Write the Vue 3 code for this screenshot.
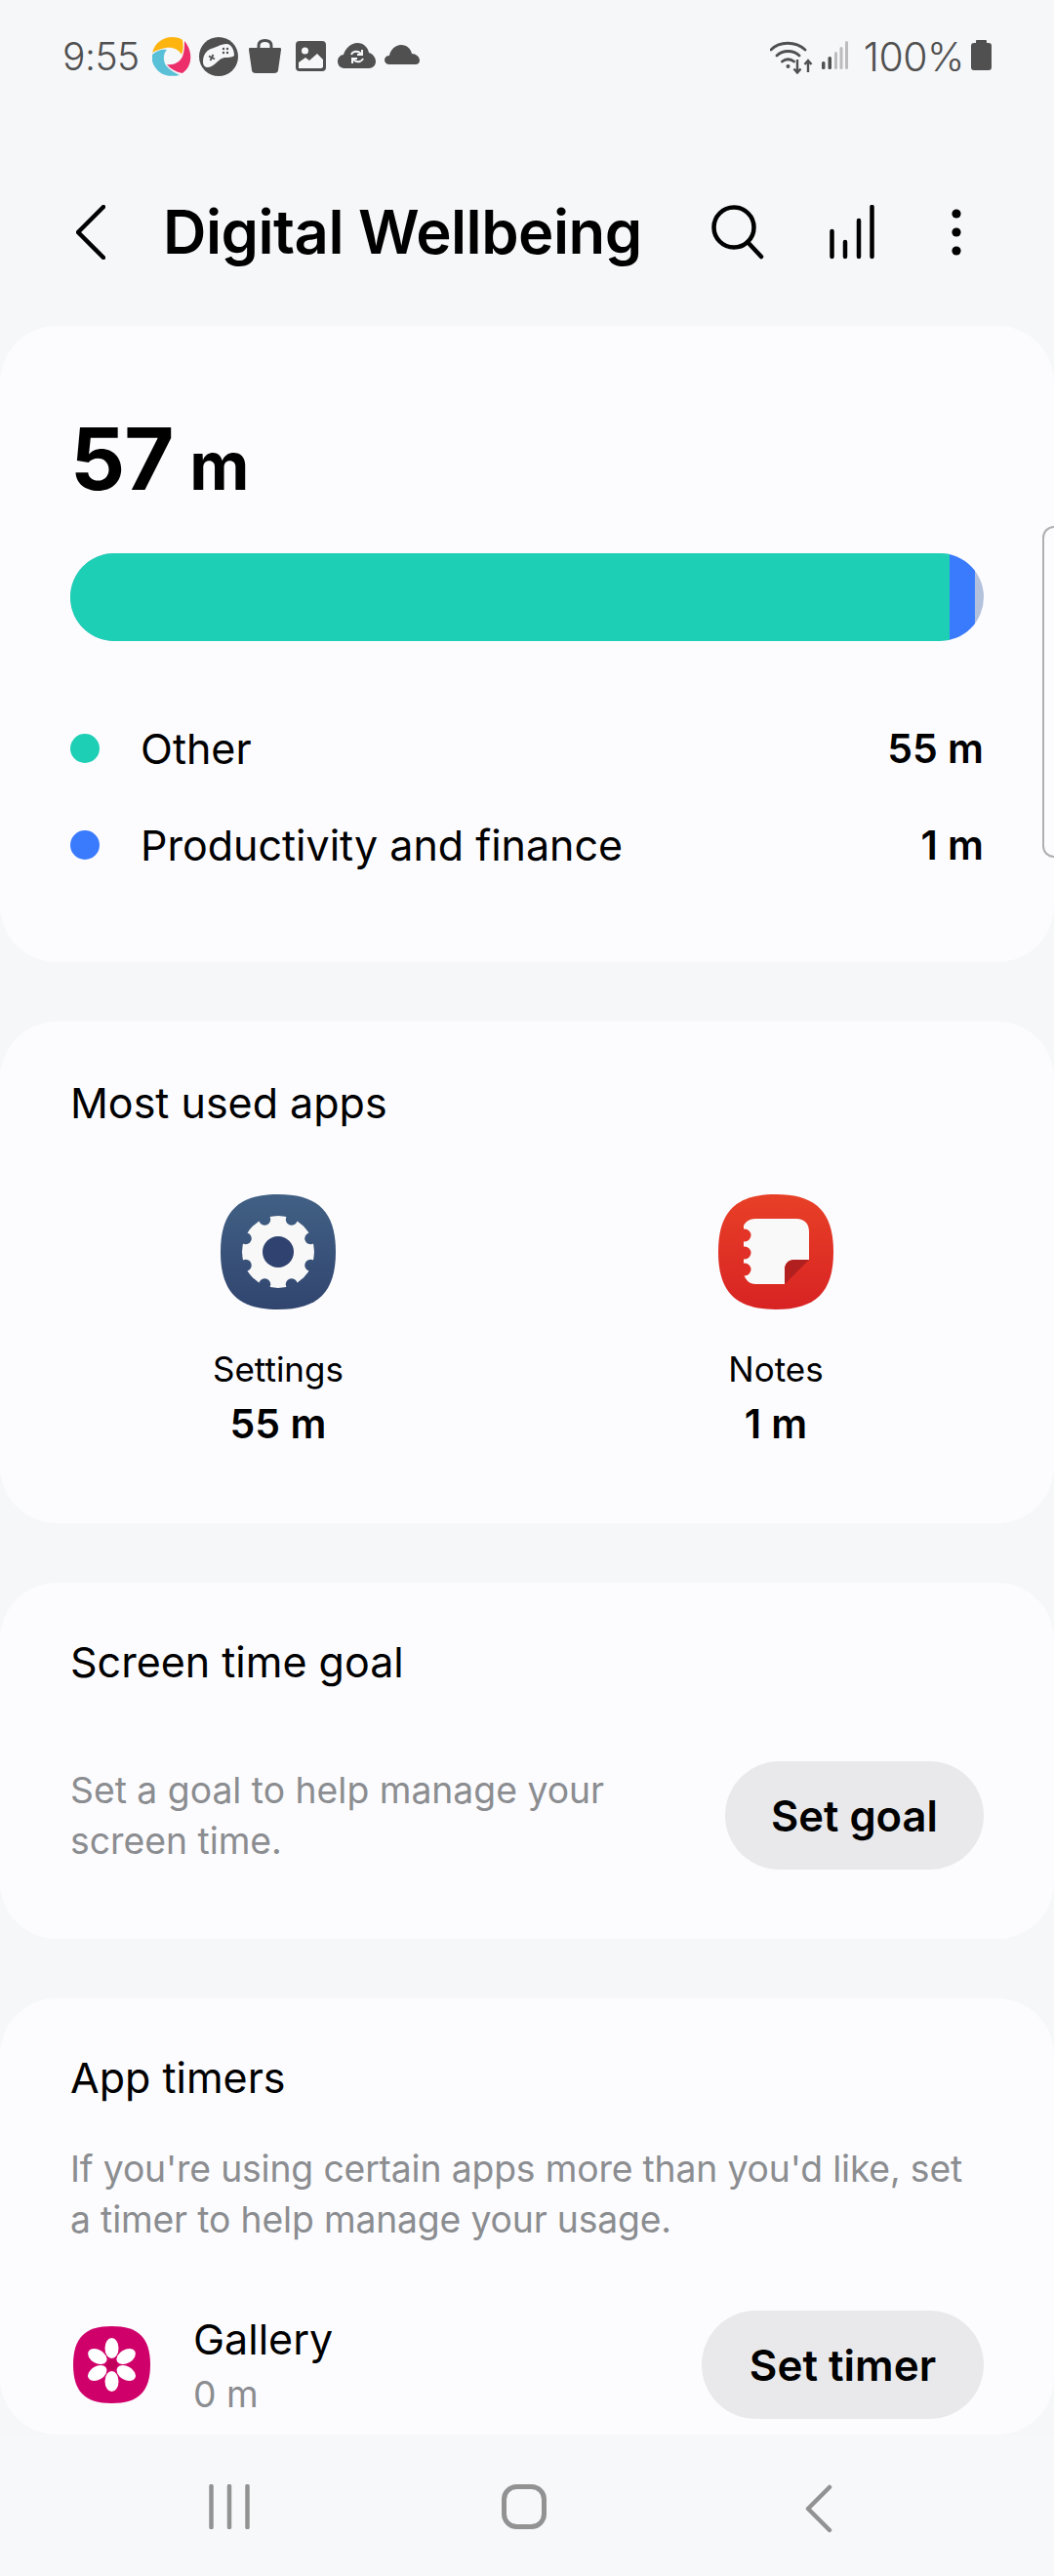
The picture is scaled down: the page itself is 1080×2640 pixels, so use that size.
<script setup>
const gearNotches = [0, 1, 2, 3, 4, 5, 6, 7].map((i) => {
    const angle = ((22.5 + i * 45) * Math.PI) / 180;
    return { x: 59 + Math.sin(angle) * 36, y: 59 - Math.cos(angle) * 36 };
});
const petals = [0, 60, 120, 180, 240, 300];
</script>

<template>
    <div class="screen">
        <div class="status-bar">
            <span class="time">9:55</span>
            <svg class="st-swirl" width="40" height="40" viewBox="0 0 40 40">
                <path d="M0 16C3 5 12 0 20 0C25 0 29 1 31 3C32 8 32 13 30 18C27 12 20 10 14 11C8 12 3 14 0 16Z" fill="#fdb40f" />
                <path d="M33 4C38 10 40 17 39 24C38 30 35 34 31 37C25 36 19 33 15 28C22 29 28 26 31 20C33 15 33 9 33 4Z" fill="#ec2f6b" />
                <path d="M0 18C4 14 10 12 15 13C11 17 11 24 14 29C18 34 24 37 28 39C19 41 9 40 3 31C0 27 -1 22 0 18Z" fill="#59c0d8" />
            </svg>
            <svg class="st-game" width="40" height="40" viewBox="0 0 40 40">
                <circle cx="20" cy="20" r="20" fill="#505050" />
                <path d="M4 25C4 19 7 14 12 12C17 11 22 7 28 7C33 7 36 13 36 19C32 22 27 20 23 22C18 25 14 31 9 31C6 31 4 29 4 25Z" fill="#f6f7f9" />
                <path d="M10 19.500L16 22.500M14.500 18L11.500 24" stroke="#505050" stroke-width="1.800" />
                <circle cx="25" cy="12" r="1.200" fill="#505050" />
                <circle cx="29" cy="12" r="1.200" fill="#505050" />
                <circle cx="25" cy="16" r="1.200" fill="#505050" />
                <circle cx="29" cy="16" r="1.200" fill="#505050" />
            </svg>
            <svg class="st-bag" width="33" height="36" viewBox="0 0 33 36">
                <path d="M1 9H32C33 9 33 10 33 11L30 32C30 34 28 35 26 35H7C5 35 3 34 3 32L0 11C0 10 0 9 1 9Z" fill="#505050" />
                <path d="M10 10V7C10 3 13 1.500 16.500 1.500C20 1.500 23 3 23 7V10" fill="none" stroke="#505050" stroke-width="3" />
            </svg>
            <svg class="st-pic" width="31" height="31" viewBox="0 0 31 31">
                <rect width="31" height="31" rx="4" fill="#505050" />
                <circle cx="9.500" cy="10" r="3.500" fill="#f6f7f9" />
                <path d="M3 28V22L10 17L14 20L22 13L28 19V26C28 27 27 28 26 28Z" fill="#f6f7f9" />
            </svg>
            <svg class="st-cloud-sync" width="39" height="27" viewBox="0 0 39 27">
                <path d="M7 26C2 26 0 22 0 19C0 15 3 12 6 12C8 5 14 0 20 0C27 0 31 5 32 10C36 11 39 15 39 19C39 23 36 26 32 26Z" fill="#505050" />
                <path d="M14 12C15 9 19 8 22 9.500L24 11M26 16C25 19 21 20 18 18.500L16 17" fill="none" stroke="#f6f7f9" stroke-width="2" />
                <path d="M25 7V12H20M15 21V16H20" fill="none" stroke="#f6f7f9" stroke-width="2" />
            </svg>
            <svg class="st-cloud" width="36" height="20" viewBox="0 0 36 20">
                <path d="M5 20C2 20 0 18 0 15.500C0 13 2 11 5 11C6 5 11 0 17 0C23 0 27 4 28 9C32 9 36 12 36 16C36 18.500 34 20 32 20Z" fill="#505050" />
            </svg>
            <span class="status-spacer"></span>
            <svg class="st-wifi" width="44" height="34" viewBox="0 0 44 34">
                <path d="M1 9C10 0 26 0 36 9M7 15C13 9 24 9 30 15M12.500 21C16 18 21 18 24.500 21" fill="none" stroke="#505050" stroke-width="2.800" stroke-linecap="round" />
                <circle cx="18.500" cy="26" r="2" fill="#505050" />
                <path d="M28 19V32M24.500 28.500L28 32.500L31.500 28.500M39 32V20M35.500 24L39 20L42.500 24" fill="none" stroke="#505050" stroke-width="2.400" />
            </svg>
            <svg class="st-signal" width="27" height="30" viewBox="0 0 27 30">
                <rect x="0" y="21" width="3.500" height="8" rx="1.500" fill="#505050" />
                <rect x="6.500" y="16" width="3.500" height="13" rx="1.500" fill="#505050" />
                <rect x="13" y="11" width="3" height="18" rx="1.500" fill="#bcbcbe" />
                <rect x="18.500" y="6" width="3" height="23" rx="1.500" fill="#bcbcbe" />
                <rect x="24" y="0" width="3" height="29" rx="1.500" fill="#bcbcbe" />
            </svg>
            <span class="battery-text">100%</span>
            <svg class="st-battery" width="21" height="31" viewBox="0 0 21 31">
                <path d="M6 0H15C15.500 0 16 .5 16 1V3H18C20 3 21 4 21 6V28C21 30 20 31 18 31H3C1 31 0 30 0 28V6C0 4 1 3 3 3H5V1C5 .5 5.500 0 6 0Z" fill="#505050" />
            </svg>
        </div>

        <div class="header">
            <svg class="back" width="30" height="56" viewBox="0 0 30 56">
                <path d="M28 2L2 28L28 54" fill="none" stroke="#000" stroke-width="4.500" stroke-linecap="round" stroke-linejoin="round" />
            </svg>
            <h1 class="title">Digital Wellbeing</h1>
            <svg class="search" width="54" height="56" viewBox="0 0 54 56">
                <circle cx="23" cy="23" r="20.500" fill="none" stroke="#000" stroke-width="4.500" />
                <path d="M37 38L51 53" stroke="#000" stroke-width="4.500" stroke-linecap="round" />
            </svg>
            <svg class="stats" width="46" height="56" viewBox="0 0 46 56">
                <path d="M2.500 27V53M16 38V53M30 16V53M43.500 2V53" stroke="#000" stroke-width="4.500" stroke-linecap="round" />
            </svg>
            <svg class="more" width="10" height="48" viewBox="0 0 10 48">
                <circle cx="5" cy="5" r="4.600" />
                <circle cx="5" cy="24" r="4.600" />
                <circle cx="5" cy="43" r="4.600" />
            </svg>
        </div>

        <main class="content">
            <section class="card usage">
                <div class="total">57 <span class="total-unit">m</span></div>
                <div class="bar">
                    <div class="bar-other"></div>
                    <div class="bar-prod"></div>
                </div>
                <div class="legend">
                    <span class="dot dot-teal"></span>
                    <span class="legend-name">Other</span>
                    <span class="legend-val">55 m</span>
                </div>
                <div class="legend">
                    <span class="dot dot-blue"></span>
                    <span class="legend-name">Productivity and finance</span>
                    <span class="legend-val">1 m</span>
                </div>
                <div class="scrollbar"></div>
            </section>

            <section class="card most-used">
                <h2 class="card-title">Most used apps</h2>
                <div class="apps">
                    <div class="app">
                        <svg width="118" height="118" viewBox="0 0 118 118">
                            <defs>
                                <linearGradient id="settingsBg" x1="0" y1="0" x2="0" y2="1">
                                    <stop offset="0" stop-color="#416084" />
                                    <stop offset="1" stop-color="#31456f" />
                                </linearGradient>
                                <mask id="gearMask">
                                    <circle cx="59" cy="59" r="37" fill="#fff" />
                                    <circle v-for="(n, i) in gearNotches" :key="i" :cx="n.x" :cy="n.y" r="6" fill="#000" />
                                </mask>
                            </defs>
                            <path d="M59 0C100 0 118 18 118 59S100 118 59 118 0 100 0 59 18 0 59 0Z" fill="url(#settingsBg)" />
                            <rect x="20" y="20" width="78" height="78" fill="#f8f8f8" mask="url(#gearMask)" />
                            <circle cx="59" cy="59" r="16" fill="#30426f" />
                        </svg>
                        <span class="app-name">Settings</span>
                        <span class="app-time">55 m</span>
                    </div>
                    <div class="app">
                        <svg width="118" height="118" viewBox="0 0 118 118">
                            <defs>
                                <linearGradient id="notesBg" x1="0" y1="0" x2="0" y2="1">
                                    <stop offset="0" stop-color="#e84027" />
                                    <stop offset="1" stop-color="#d82323" />
                                </linearGradient>
                            </defs>
                            <path d="M59 0C100 0 118 18 118 59S100 118 59 118 0 100 0 59 18 0 59 0Z" fill="url(#notesBg)" />
                            <path d="M38 25H80C88 25 93 30 93 38V67H78C72 67 68 71 68 77V92H38C32 92 28 88 26 82V32C28 28 32 25 38 25Z" fill="#f9f9f9" />
                            <circle cx="27" cy="42" r="6.500" fill="#e43327" />
                            <circle cx="27" cy="60" r="6.500" fill="#e13027" />
                            <circle cx="27" cy="77" r="6.500" fill="#df2d26" />
                            <path d="M93 67H78C72 67 68 71 68 77V92Z" fill="#b21f1f" />
                        </svg>
                        <span class="app-name">Notes</span>
                        <span class="app-time">1 m</span>
                    </div>
                </div>
            </section>

            <section class="card goal">
                <h2 class="card-title">Screen time goal</h2>
                <div class="goal-row">
                    <p class="desc">Set a goal to help manage your screen time.</p>
                    <button class="pill pill-goal">Set goal</button>
                </div>
            </section>

            <section class="card timers">
                <h2 class="card-title">App timers</h2>
                <p class="desc timers-desc">If you're using certain apps more than you'd like, set a timer to help manage your usage.</p>
                <div class="timer-row">
                    <svg class="gallery-icon" width="79" height="79" viewBox="0 0 79 79">
                        <path d="M39.500 0C67 0 79 12 79 39.500S67 79 39.500 79 0 67 0 39.500 12 0 39.500 0Z" fill="#d0006a" />
                        <ellipse v-for="deg in petals" :key="deg" cx="39.500" cy="22.500" rx="7" ry="10.500" fill="#fff" :transform="`rotate(${deg} 39.500 39.500)`" />
                        <circle cx="39.500" cy="39.500" r="5.500" fill="#c0005a" />
                    </svg>
                    <div class="timer-text">
                        <span class="timer-name">Gallery</span>
                        <span class="timer-time">0 m</span>
                    </div>
                    <button class="pill pill-timer">Set timer</button>
                </div>
            </section>
        </main>

        <nav class="nav-bar">
            <svg width="42" height="46" viewBox="0 0 42 46">
                <path d="M2.500 2V44M21 2V44M39.500 2V44" stroke="#929292" stroke-width="4.500" stroke-linecap="round" />
            </svg>
            <svg class="nav-home" width="46" height="46" viewBox="0 0 46 46">
                <rect x="2.500" y="2.500" width="41" height="41" rx="13" fill="none" stroke="#929292" stroke-width="5" />
            </svg>
            <svg class="nav-back" width="28" height="50" viewBox="0 0 28 50">
                <path d="M25 3L3 25L25 47" fill="none" stroke="#929292" stroke-width="4.500" stroke-linecap="round" stroke-linejoin="round" />
            </svg>
        </nav>
    </div>
</template>

<style>
body {
    margin: 0;
}
</style>

<style scoped>
.screen {
    width: 1080px;
    height: 2640px;
    display: flex;
    flex-direction: column;
    overflow: hidden;
    background: #f6f7f9;
    font-family: Inter, "Liberation Sans", sans-serif;
    color: #000;
}

.status-bar {
    height: 114px;
    box-sizing: border-box;
    padding: 38px 64px 0 64px;
    display: flex;
    align-items: flex-start;
    color: #505050;
}

.time {
    font-size: 39px;
    line-height: 40px;
    font-weight: 300;
    letter-spacing: -0.5px;
}

.st-swirl {
    margin-left: 13px;
}

.st-game {
    margin-left: 8px;
}

.st-bag {
    margin-left: 11px;
    margin-top: 2px;
}

.st-pic {
    margin-left: 15px;
    margin-top: 4px;
}

.st-cloud-sync {
    margin-left: 12px;
    margin-top: 6px;
}

.st-cloud {
    margin-left: 9px;
    margin-top: 8px;
}

.status-spacer {
    flex: 1;
}

.st-wifi {
    margin-top: 4px;
}

.st-signal {
    margin-left: 9px;
    margin-top: 4px;
}

.battery-text {
    margin-left: 16px;
    font-size: 41px;
    line-height: 40px;
    font-weight: 300;
    letter-spacing: -0.5px;
}

.st-battery {
    margin-left: 7px;
    margin-top: 3px;
}

.header {
    height: 220px;
    box-sizing: border-box;
    padding: 96px 0 0 78px;
    display: flex;
    align-items: flex-start;
}

.title {
    margin: -10px 0 0 59px;
    width: 562px;
    font-size: 61.500px;
    line-height: 76px;
    font-weight: 600;
    letter-spacing: -0.5px;
    white-space: nowrap;
}

.stats {
    margin-left: 67px;
}

.more {
    margin: 4px 0 0 79px;
}

.content {
    height: 2162px;
    flex: none;
    display: flex;
    flex-direction: column;
    gap: 61px;
}

.card {
    position: relative;
    box-sizing: border-box;
    background: #fcfcff;
    border-radius: 58px;
    padding: 0 72px;
}

.usage {
    height: 652px;
    padding-top: 83px;
}

.total {
    font-size: 88px;
    line-height: 106px;
    font-weight: 700;
    letter-spacing: -1px;
    word-spacing: -3px;
}

.total-unit {
    font-size: 67px;
    line-height: 1;
}

.bar {
    margin-top: 44px;
    height: 90px;
    border-radius: 45px;
    overflow: hidden;
    display: flex;
    background: #b3c1dc;
}

.bar-other {
    width: 901px;
    background: #1dcfb5;
}

.bar-prod {
    width: 26px;
    background: #3a7bfd;
}

.legend {
    height: 99px;
    display: flex;
    align-items: center;
    font-size: 43px;
}

.bar + .legend {
    margin-top: 60px;
}

.dot {
    width: 30px;
    height: 30px;
    border-radius: 50%;
    margin-right: 42px;
}

.dot-teal {
    background: #1dcfb5;
}

.dot-blue {
    background: #3a7bfd;
}

.legend-name {
    flex: 1;
}

.legend-val {
    font-weight: 600;
    font-size: 41px;
}

.scrollbar {
    position: absolute;
    right: 0;
    top: 205px;
    width: 12px;
    height: 340px;
    box-sizing: border-box;
    border: 2px solid #b0b0b0;
    border-right: none;
    border-radius: 12px 0 0 12px;
}

.most-used {
    height: 514px;
    padding-top: 54px;
}

.card-title {
    margin: 0;
    font-size: 43px;
    line-height: 58px;
    font-weight: 400;
}

.apps {
    margin-top: 65px;
    display: flex;
    justify-content: space-between;
    padding: 0 103px;
}

.app {
    width: 220px;
    display: flex;
    flex-direction: column;
    align-items: center;
}

.app svg {
    margin-bottom: 38px;
}

.app-name {
    font-size: 35px;
    line-height: 46px;
}

.app-time {
    margin-top: 8px;
    font-size: 41px;
    line-height: 50px;
    font-weight: 600;
}

.goal {
    height: 365px;
    padding-top: 52px;
}

.goal-row {
    margin-top: 73px;
    display: flex;
    align-items: center;
    justify-content: space-between;
}

.desc {
    margin: 0;
    width: 600px;
    font-size: 37.300px;
    line-height: 52px;
    color: #8b8d90;
}

.pill {
    flex: none;
    height: 111px;
    padding: 0;
    border: none;
    border-radius: 56px;
    background: #e9e9eb;
    font-family: inherit;
    font-size: 43.500px;
    font-weight: 600;
    color: #000;
}

.pill-goal {
    width: 265px;
}

.pill-timer {
    width: 289px;
    font-size: 44px;
}

.timers {
    height: 447px;
    padding-top: 52px;
}

.timers-desc {
    width: auto;
    margin-top: 39px;
    letter-spacing: -0.16px;
}

.timer-row {
    margin-top: 67px;
    display: flex;
    align-items: center;
    margin-left: 3px;
}

.timer-text {
    flex: 1;
    margin-left: 44px;
    display: flex;
    flex-direction: column;
}

.timer-name {
    font-size: 43px;
    line-height: 56px;
}

.timer-time {
    margin-top: 4px;
    font-size: 37.300px;
    line-height: 50px;
    color: #8b8d90;
}

.nav-bar {
    flex: 1;
    background: #f7f8fa;
    box-sizing: border-box;
    padding: 50px 0 0 214px;
    display: flex;
    align-items: flex-start;
}

.nav-home {
    margin-left: 258px;
}

.nav-back {
    margin-left: 265px;
}
</style>
